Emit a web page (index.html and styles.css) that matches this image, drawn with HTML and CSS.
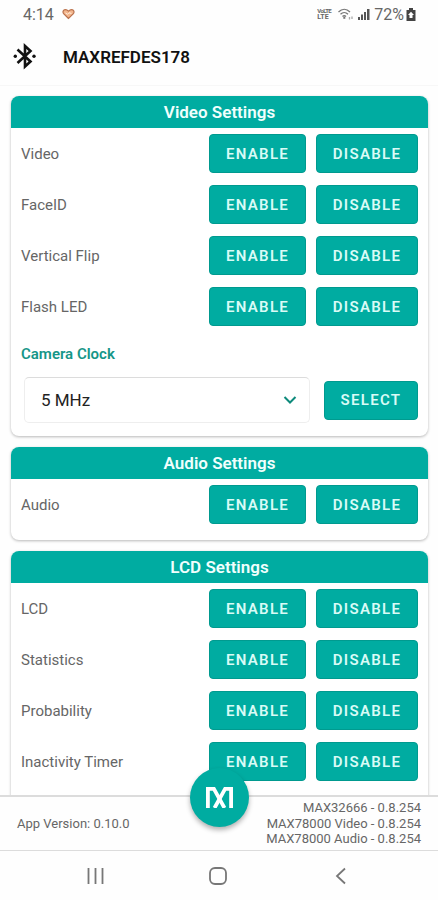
FILE: index.html
```html
<!DOCTYPE html>
<html lang="en">
<head>
    <meta charset="UTF-8">
    <meta name="viewport" content="width=device-width, initial-scale=1.0">
    <title>MAXREFDES178</title>
    <link rel="stylesheet" href="styles.css">
</head>
<body>
    <div class="screen">
        <!-- Status bar -->
        <div class="status-bar">
            <div class="status-left">
                <span class="clock">4:14</span>
                <svg class="heart" width="13" height="12" viewBox="0 0 13 12">
                    <path d="M6.5 10.5L1.6 5.6C.4 4 1.2 1.6 3.3 1.6c1.4 0 2.4.7 3.2 1.6.8-.9 1.8-1.6 3.2-1.6 2.1 0 2.9 2.4 1.7 4z" fill="#f3b58c" stroke="#b9714d" stroke-width="1.2"/>
                    <path d="M3.5 5l2 1.3L7 4.8l2.5.6" fill="none" stroke="#fff0e0" stroke-width="1"/>
                </svg>
            </div>
            <div class="status-right">
                <span class="volte"><span>VoLTE</span><span class="lte">LTE</span></span>
                <svg class="wifi" width="16" height="13" viewBox="0 0 16 13" fill="none" stroke="#777" stroke-width="1.3">
                    <path d="M.5 4C4 .5 8.500.5 12 4M2.500 6.300c2.200-2.200 5.300-2.200 7.500 0M4.500 8.500c1.100-1.100 2.400-1.100 3.500 0"/>
                    <path d="M6.300 8.500v2.300" stroke-width="2"/>
                    <path d="M11.500 11.500V9M14 8.500V11" stroke="#aaa"/>
                </svg>
                <svg class="signal" width="12" height="12" viewBox="0 0 12 12" fill="#555">
                    <path d="M0 9h2v3H0zM3 6.500h2V12H3zM6 4h2v8H6zM9 1h2.500v11H9z"/>
                </svg>
                <span class="percent">72%</span>
                <svg class="battery" width="10" height="13" viewBox="0 0 10 13">
                    <path d="M3 0h4v2h2.500v11h-9V2H3z" fill="#444"/>
                    <path d="M5 3.800L2 7h1.500v3h3V7H8z" fill="#fff"/>
                </svg>
            </div>
        </div>

        <!-- App bar -->
        <header class="app-bar">
            <svg class="bluetooth" width="24" height="28" viewBox="0 0 24 28">
                <path d="M4.500 6.500L17.500 18.500 12 23.500V3L17.500 8 4.500 20" fill="none" stroke="#111" stroke-width="2.600"/>
                <circle cx="2.300" cy="13.300" r="1.700" fill="#111"/>
                <circle cx="21" cy="13.300" r="1.700" fill="#111"/>
            </svg>
            <h1 class="app-title">MAXREFDES178</h1>
        </header>

        <!-- Settings -->
        <main class="content">
            <section class="card video-card">
                <h2 class="card-title">Video Settings</h2>
                <div class="row">
                    <span class="label">Video</span>
                    <button class="btn enable">ENABLE</button>
                    <button class="btn disable">DISABLE</button>
                </div>
                <div class="row">
                    <span class="label">FaceID</span>
                    <button class="btn enable">ENABLE</button>
                    <button class="btn disable">DISABLE</button>
                </div>
                <div class="row">
                    <span class="label">Vertical Flip</span>
                    <button class="btn enable">ENABLE</button>
                    <button class="btn disable">DISABLE</button>
                </div>
                <div class="row">
                    <span class="label">Flash LED</span>
                    <button class="btn enable">ENABLE</button>
                    <button class="btn disable">DISABLE</button>
                </div>
                <h3 class="sub-title">Camera Clock</h3>
                <div class="clock-row">
                    <div class="dropdown">
                        <span>5 MHz</span>
                        <svg width="14" height="10" viewBox="0 0 14 10">
                            <path d="M1.500 2L7 7.500 12.500 2" fill="none" stroke="#0d8a7b" stroke-width="2"/>
                        </svg>
                    </div>
                    <button class="btn select">SELECT</button>
                </div>
            </section>

            <section class="card audio-card">
                <h2 class="card-title">Audio Settings</h2>
                <div class="row">
                    <span class="label">Audio</span>
                    <button class="btn enable">ENABLE</button>
                    <button class="btn disable">DISABLE</button>
                </div>
            </section>

            <section class="card lcd-card">
                <h2 class="card-title">LCD Settings</h2>
                <div class="row">
                    <span class="label">LCD</span>
                    <button class="btn enable">ENABLE</button>
                    <button class="btn disable">DISABLE</button>
                </div>
                <div class="row">
                    <span class="label">Statistics</span>
                    <button class="btn enable">ENABLE</button>
                    <button class="btn disable">DISABLE</button>
                </div>
                <div class="row">
                    <span class="label">Probability</span>
                    <button class="btn enable">ENABLE</button>
                    <button class="btn disable">DISABLE</button>
                </div>
                <div class="row">
                    <span class="label">Inactivity Timer</span>
                    <button class="btn enable">ENABLE</button>
                    <button class="btn disable">DISABLE</button>
                </div>
            </section>
        </main>

        <!-- Version footer -->
        <footer class="footer">
            <span class="app-version">App Version: 0.10.0</span>
            <div class="fw-versions">
                <span>MAX32666 - 0.8.254</span>
                <span>MAX78000 Video - 0.8.254</span>
                <span>MAX78000 Audio - 0.8.254</span>
            </div>
            <button class="fab" aria-label="Home">
                <svg width="27" height="21" viewBox="0 0 27 21" fill="none" stroke="#fff" stroke-width="3.800">
                    <path d="M1.900 21V1.900h6L18.500 21"/>
                    <path d="M25.100 21V1.900h-6L8.500 21"/>
                </svg>
            </button>
        </footer>

        <!-- System navigation -->
        <nav class="nav-bar">
            <svg width="18" height="18" viewBox="0 0 18 18">
                <path d="M2.500 1v16M9.500 1v16M16.500 1v16" stroke="#777" stroke-width="1.800"/>
            </svg>
            <svg width="18" height="18" viewBox="0 0 18 18">
                <rect x="1" y="1" width="16" height="16" rx="5" fill="none" stroke="#777" stroke-width="1.800"/>
            </svg>
            <svg width="18" height="18" viewBox="0 0 18 18">
                <path d="M13 1.500L5 9l8 7.500" fill="none" stroke="#777" stroke-width="1.800"/>
            </svg>
        </nav>
    </div>
</body>
</html>
```
FILE: styles.css
```css
:root {
    --teal: #00aca1;
    --teal-dark: #009a8f;
    --text: #666;
    --line: #dcdcdc;
}

* {
    box-sizing: border-box;
}

body {
    margin: 0;
    background: #fefefe;
    font-family: Roboto, sans-serif;
    color: var(--text);
}

.screen {
    width: 438px;
    height: 900px;
    display: flex;
    flex-direction: column;
    overflow: hidden;
}

h1, h2, h3 {
    margin: 0;
}

svg {
    display: block;
    flex-shrink: 0;
}

/* Status bar */
.status-bar {
    height: 28px;
    padding: 0 22px 0 23px;
    display: flex;
    align-items: center;
    justify-content: space-between;
    font-size: 16px;
}

.status-left, .status-right {
    display: flex;
    align-items: center;
}

.status-left {
    gap: 8px;
}

.volte {
    display: flex;
    flex-direction: column;
    width: 14px;
    margin-right: 7px;
    font-size: 6px;
    font-weight: 700;
    line-height: 6px;
    letter-spacing: -0.6px;
}

.lte {
    font-size: 7px;
    letter-spacing: 0;
}

.wifi {
    margin-right: 4px;
}

.percent {
    margin: 0 2px 0 4px;
}

/* App bar */
.app-bar {
    height: 57px;
    padding-left: 13px;
    display: flex;
    align-items: center;
    gap: 26px;
}

.app-title {
    font-size: 17px;
    font-weight: 600;
    color: #111;
}

/* Cards */
.content {
    height: 710px;
    padding: 10px 10px 0 11px;
    display: flex;
    flex-direction: column;
    gap: 11px;
    overflow: hidden;
    border-top: 1px solid #f7f7f7;
}

.card {
    flex-shrink: 0;
    background: #fff;
    border-radius: 8px;
    box-shadow: 0 1px 3px rgba(0, 0, 0, 0.28);
    overflow: hidden;
}

.card-title {
    height: 32px;
    margin-bottom: 6px;
    background: var(--teal);
    color: #f0fffd;
    font-size: 17px;
    font-weight: 600;
    line-height: 33px;
    text-align: center;
}

.row {
    height: 39px;
    margin-bottom: 12px;
    padding: 0 10px;
    display: flex;
    align-items: center;
    gap: 10px;
}

.label {
    flex: 1;
    padding-top: 1px;
    font-size: 15px;
}

.btn {
    height: 39px;
    padding: 0;
    background: var(--teal);
    border: 1px solid var(--teal-dark);
    border-radius: 4px;
    color: #d9fbf6;
    font-family: inherit;
    font-size: 15px;
    font-weight: 600;
    letter-spacing: 1.3px;
}

.enable {
    width: 97px;
}

.disable {
    width: 102px;
}

.select {
    width: 94px;
}

.video-card {
    height: 340px;
}

.audio-card {
    height: 93px;
}

.lcd-card {
    height: 300px;
}

.sub-title {
    padding: 7px 10px 0;
    color: #159688;
    font-size: 15px;
    font-weight: 600;
    line-height: 18px;
}

.clock-row {
    padding: 14px 10px 0 13px;
    display: flex;
    align-items: center;
    justify-content: space-between;
}

.dropdown {
    width: 286px;
    height: 46px;
    padding: 0 12px 0 16px;
    display: flex;
    align-items: center;
    justify-content: space-between;
    border: 1px solid #eee;
    border-top-color: var(--line);
    border-radius: 5px;
    color: #222;
    font-size: 17px;
}

/* Footer */
.footer {
    position: relative;
    height: 56px;
    padding: 0 17px;
    display: flex;
    align-items: center;
    justify-content: space-between;
    border-top: 2px solid var(--line);
    border-bottom: 1px solid var(--line);
    font-size: 13px;
}

.fw-versions {
    display: flex;
    flex-direction: column;
    font-size: 13px;
    line-height: 15.5px;
    text-align: right;
}

.fab {
    position: absolute;
    left: 190px;
    top: -29px;
    width: 59px;
    height: 59px;
    padding: 0;
    display: flex;
    align-items: center;
    justify-content: center;
    background: var(--teal);
    border: none;
    border-radius: 50%;
    box-shadow: 0 3px 5px rgba(0, 0, 0, 0.3);
}

/* System navigation */
.nav-bar {
    height: 49px;
    padding: 0 88px 0 86px;
    display: flex;
    align-items: center;
    justify-content: space-between;
}
```
